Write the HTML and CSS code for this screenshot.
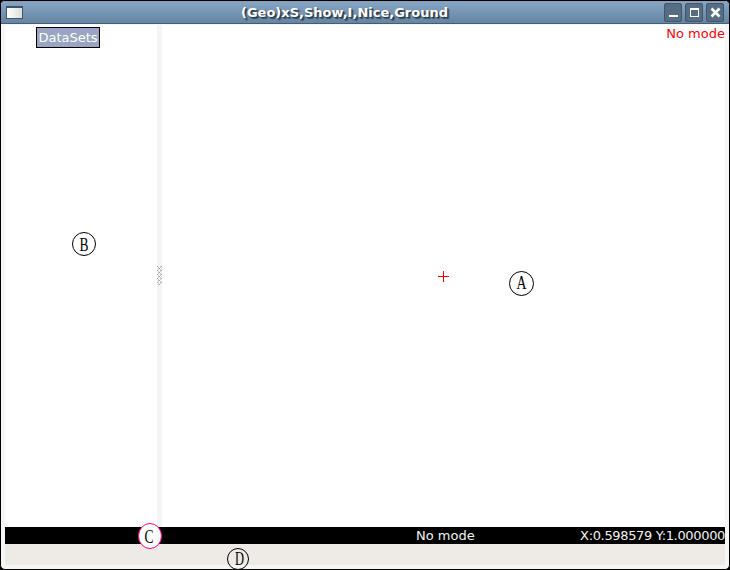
FILE: index.html
```html
<!DOCTYPE html>
<html lang="en">
<head>
<meta charset="utf-8">
<title>(Geo)xS,Show,I,Nice,Ground</title>
<link rel="stylesheet" href="styles.css">
</head>
<body>
<div class="window">
  <header class="titlebar">
    <svg class="app-icon" width="18" height="14" viewBox="0 0 18 14"><defs><linearGradient id="g"><stop offset="0" stop-color="#fff"/><stop offset="1" stop-color="#deded8"/></linearGradient></defs><path fill="#405568" d="M0 0h17v13H0z"/><path fill="url(#g)" d="M1 2h15v10H1z"/></svg>
    <h1 class="title">(Geo)xS,Show,I,Nice,Ground</h1>
    <div class="controls">
      <span class="control"><svg width="18" height="18" shape-rendering="crispEdges"><path fill="#fff" d="M4 11h9v2H4z"/></svg></span>
      <span class="control"><svg width="18" height="18" shape-rendering="crispEdges"><path fill="#fff" fill-rule="evenodd" d="M4 4h9v9H4zM5 6v6h7V6z"/></svg></span>
      <span class="control"><svg width="18" height="18"><path stroke="#fff" stroke-width="2.600" d="M4.500 4.500l8 8m0-8l-8 8"/></svg></span>
    </div>
  </header>
  <main class="panes">
    <aside class="sidebar"><button class="datasets">DataSets</button></aside>
    <div class="divider"><svg width="5" height="19"><defs><pattern id="p" width="4" height="4" patternUnits="userSpaceOnUse"><path fill="#a4a4a4" d="M0 0h1v1H0zM2 2h1v1H2z"/><path fill="#ccc" d="M1 1h1v1H1zM3 1h1v1H3zM1 3h1v1H1zM3 3h1v1H3zM3 0h1v1H3zM1 2h1v1H1z"/></pattern></defs><path fill="url(#p)" d="M0 0h5v19H0z"/></svg></div>
    <section class="canvas"><span class="mode">No mode</span></section>
  </main>
  <div class="status"><span></span><span class="status-mode">No mode</span><span class="coords">X:0.598579 Y:1.000000</span></div>
  <footer class="footer"></footer>
  <svg class="annotations" width="730" height="570">
    <path stroke="#f00" d="M438 276.500h11M443.500 271v11"/>
    <ellipse class="ring" cx="84" cy="244" rx="11.500" ry="11.500"/>
    <ellipse class="ring" cx="521.500" cy="283.500" rx="12" ry="12"/>
    <ellipse class="ring pink" cx="150" cy="536" rx="11.500" ry="12.500"/>
    <ellipse class="ring clear" cx="238" cy="559" rx="10.500" ry="10.500"/>
    <text class="letter" x="84" y="250.500" textLength="9" lengthAdjust="spacingAndGlyphs">B</text>
    <text class="letter" x="521.500" y="289" textLength="10" lengthAdjust="spacingAndGlyphs">A</text>
    <text class="letter" x="149" y="543" textLength="9" lengthAdjust="spacingAndGlyphs">C</text>
    <text class="letter" x="239.500" y="565" textLength="9" lengthAdjust="spacingAndGlyphs">D</text>
  </svg>
</div>
</body>
</html>
```
FILE: styles.css
```css
* { box-sizing: border-box; }
body { margin: 0; background: #000; font: 13px "DejaVu Sans", sans-serif; }
.window {
  position: relative;
  width: 730px;
  height: 570px;
  display: flex;
  flex-direction: column;
  border: 1px solid #000;
  border-radius: 5px;
  background: #f6f6f6;
  overflow: hidden;
}
.titlebar {
  height: 23px;
  flex: none;
  display: grid;
  grid-template-columns: 64px 1fr 65px;
  align-items: center;
  background: linear-gradient(#86a4c3, #6685a3);
  border-top: 1px solid #829db5;
  border-bottom: 1px solid #435d75;
}
.app-icon { margin-left: 5px; margin-top: 1px; }
.title {
  margin: 0;
  padding-right: 40px;
  text-align: center;
  color: #fff;
  font-size: 13px;
  line-height: 20px;
  white-space: nowrap;
  text-shadow: 1px 1px 1px #263747, 2px 2px 1px #3a5064;
}
.controls { display: flex; gap: 3px; padding-bottom: 1px; }
.control {
  width: 18px;
  height: 19px;
  border: 1px solid #3f576e;
  border-radius: 2px;
  background: #566d82;
  overflow: hidden;
}
.control svg { display: block; }
.panes { height: 503px; flex: none; margin: 0 4px; padding-top: 1px; display: flex; }
.sidebar { width: 152px; background: #fff; padding: 2px 0 0 31px; }
.datasets {
  display: block;
  width: 64px;
  height: 21px;
  padding: 0;
  border: 1px solid #000;
  background: #99a5c2;
  color: #fff;
  font: inherit;
  line-height: 19px;
}
.divider { width: 5px; padding-bottom: 2px; display: flex; align-items: center; background: #f5f5f5; }
.divider svg { display: block; }
.canvas { flex: 1; background: #fff; text-align: right; }
.mode { display: block; color: #f00; line-height: 17px; }
.status {
  height: 17px;
  flex: none;
  margin: 0 4px;
  display: grid;
  grid-template-columns: 411px 1fr auto;
  background: #000;
  color: #f2f2f2;
  line-height: 17px;
}
.coords { letter-spacing: -0.34px; }
.footer { flex: none; height: 21px; margin: 0 4px; background: #eeeae6; }
.annotations { position: absolute; left: -1px; top: -1px; }
.ring { fill: #fff; stroke: #000; }
.clear { fill: none; }
.pink { stroke: #f08; }
.letter { font: 18px "Liberation Serif", serif; text-anchor: middle; }
```
